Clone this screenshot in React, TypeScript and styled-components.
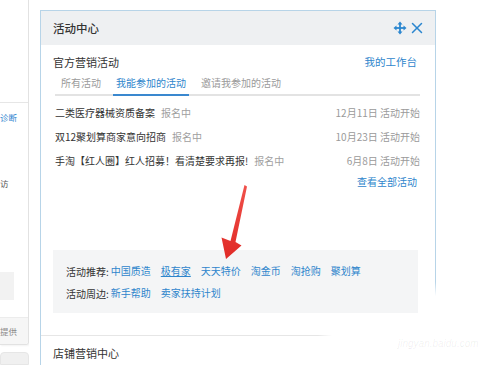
import React from "react";
import styled, { createGlobalStyle } from "styled-components";

const Global = createGlobalStyle`
  html, body { margin: 0; padding: 0; background: #fff; }
  body { font-family: "Noto Sans CJK SC", "Noto Sans", sans-serif; color: #333; }
  * { box-sizing: border-box; }
`;

const Page = styled.div`
  position: relative;
  width: 500px;
  height: 365px;
  overflow: hidden;
  display: flex;
  align-items: flex-start;
  background: #fff;
`;

const Sidebar = styled.div`
  width: 29px;
  height: 365px;
  display: flex;
  flex-direction: column;
  flex-shrink: 0;
  overflow: hidden;
`;

const SideCard = styled.div`
  height: 345px;
  border-right: 1px solid #e2e2e2;
  border-bottom: 1px solid #e2e2e2;
  border-bottom-right-radius: 3px;
  box-shadow: 1px 1px 2px rgba(0, 0, 0, 0.05);
  display: flex;
  flex-direction: column;
  overflow: hidden;
`;

const SideTop = styled.div`
  height: 103px;
  flex-shrink: 0;
  border-bottom: 1px solid #e6e6e6;
`;

const SideText = styled.div<{ $top: number; $blue?: boolean }>`
  margin-top: ${(p) => p.$top}px;
  font-size: 8.5px;
  line-height: 16px;
  white-space: nowrap;
  color: ${(p) => (p.$blue ? "#2f86cf" : "#555")};
`;

const SideBlock = styled.div`
  margin-top: 81px;
  width: 14px;
  height: 28px;
  background: #f2f2f2;
`;

const SideFooter = styled.div`
  margin-top: auto;
  height: 27px;
  background: #f6f6f6;
  border-top: 1px solid #ececec;
  font-size: 8.5px;
  line-height: 26px;
  color: #8a8a8a;
  white-space: nowrap;
`;

const SideCard2 = styled.div`
  margin-top: 7px;
  flex: 1;
  background: #f0f0f0;
  border: 1px solid #e6e6e6;
  border-radius: 4px 4px 0 0;
`;

const Panel = styled.div`
  margin-left: 11px;
  margin-top: 10px;
  width: 396px;
  height: 360px;
  border: 1px solid #b7d4e8;
  border-bottom: none;
  display: flex;
  flex-direction: column;
  flex-shrink: 0;
  background: #fff;
`;

const Header = styled.div`
  height: 34px;
  background: #eef0f2;
  display: flex;
  align-items: center;
  justify-content: space-between;
  padding: 0 11px 0 12px;
  flex-shrink: 0;
`;

const HeaderTitle = styled.div`
  font-size: 11.5px;
  font-weight: 500;
  color: #333;
`;

const HeaderIcons = styled.div`
  display: flex;
  align-items: center;
  gap: 3px;
`;

const Section = styled.div`
  padding: 9px 15px 22px 12px;
  border-bottom: 1px solid #e6e6e6;
`;

const TitleRow = styled.div`
  display: flex;
  justify-content: space-between;
  align-items: center;
  height: 16px;
`;

const SectionTitle = styled.div`
  font-size: 11px;
  line-height: 16px;
  color: #333;
`;

const Link = styled.a<{ $underline?: boolean }>`
  font-size: 10px;
  line-height: 16px;
  color: #2e85cc;
  text-decoration: ${(p) => (p.$underline ? "underline" : "none")};
  white-space: nowrap;
  cursor: pointer;
`;

const HeadLink = styled(Link)`
  font-size: 10.5px;
  margin-right: 3px;
`;

const TabBar = styled.div`
  margin-top: 5px;
  margin-left: 2px;
  padding-left: 3px;
  display: flex;
  gap: 9px;
  border-bottom: 2px solid #e3e3e3;
`;

const Tab = styled.div<{ $active?: boolean }>`
  font-size: 10px;
  line-height: 16px;
  padding: 0 3px 3px;
  margin-bottom: -2px;
  border-bottom: 2px solid ${(p) => (p.$active ? "#3a88cf" : "transparent")};
  color: ${(p) => (p.$active ? "#2e85cc" : "#9a9a9a")};
  white-space: nowrap;
`;

const List = styled.div`
  margin-top: 4px;
  display: flex;
  flex-direction: column;
`;

const Row = styled.div`
  height: 24px;
  display: flex;
  align-items: center;
  justify-content: space-between;
  font-size: 10px;
  padding-left: 2px;
`;

const RowName = styled.span`
  color: #333;
  white-space: nowrap;
`;

const RowStatus = styled.span`
  color: #a0a0a0;
  margin-left: 6px;
`;

const RowDate = styled.span`
  color: #9a9a9a;
  white-space: nowrap;
`;

const MoreRow = styled.div`
  height: 20px;
  display: flex;
  align-items: center;
  justify-content: flex-end;
  padding-right: 3px;
`;

const RecBox = styled.div`
  margin-top: 58px;
  margin-right: 2px;
  background: #f4f5f6;
  padding: 10px 13px 9px;
  display: flex;
  flex-direction: column;
`;

const RecLine = styled.div`
  height: 22px;
  display: flex;
  align-items: center;
  gap: 10px;
`;

const RecLabel = styled.span`
  font-size: 10px;
  color: #333;
  margin-right: -8px;
  white-space: nowrap;
`;

const Section2 = styled.div`
  padding: 9px 12px 0;
`;

const Overlay = styled.svg`
  position: absolute;
  left: 0;
  top: 0;
  pointer-events: none;
`;

const Fade = styled.div<{ $l: number; $t: number; $w: number; $h: number; $dir: string }>`
  position: absolute;
  left: ${(p) => p.$l}px;
  top: ${(p) => p.$t}px;
  width: ${(p) => p.$w}px;
  height: ${(p) => p.$h}px;
  background: linear-gradient(${(p) => p.$dir}, rgba(255, 255, 255, 0), #fff 14px);
`;

const Watermark = styled.div`
  position: absolute;
  left: 398px;
  top: 338px;
  font-family: "Liberation Sans", sans-serif;
  font-size: 10px;
  font-style: italic;
  color: rgba(0, 0, 0, 0.07);
`;

const MoveIcon = () => (
  <svg width="14" height="14" viewBox="0 0 14 14">
    <g stroke="#2b86cf" strokeWidth="1.8" fill="none">
      <line x1="7" y1="2.5" x2="7" y2="11.5" />
      <line x1="2.5" y1="7" x2="11.5" y2="7" />
    </g>
    <g fill="#2b86cf">
      <polygon points="7,0.5 4.5,3.5 9.5,3.5" />
      <polygon points="7,13.5 4.5,10.5 9.5,10.5" />
      <polygon points="0.5,7 3.5,4.5 3.5,9.5" />
      <polygon points="13.5,7 10.5,4.5 10.5,9.5" />
    </g>
  </svg>
);

const CloseIcon = () => (
  <svg width="14" height="14" viewBox="0 0 14 14">
    <g stroke="#2b86cf" strokeWidth="1.5" strokeLinecap="round">
      <line x1="2.5" y1="2.5" x2="11.5" y2="11.5" />
      <line x1="11.5" y1="2.5" x2="2.5" y2="11.5" />
    </g>
  </svg>
);

const rows = [
  { name: "二类医疗器械资质备案", date: "12月11日 活动开始" },
  { name: "双12聚划算商家意向招商", date: "10月23日 活动开始" },
  { name: "手淘【红人圈】红人招募！看清楚要求再报!", date: "6月8日 活动开始" },
];

export default function App() {
  return (
    <Page>
      <Global />
      <Sidebar>
        <SideCard>
          <SideTop />
          <SideText $top={6} $blue>诊断</SideText>
          <SideText $top={50}>访</SideText>
          <SideBlock />
          <SideFooter>提供</SideFooter>
        </SideCard>
        <SideCard2 />
      </Sidebar>
      <Panel>
        <Header>
          <HeaderTitle>活动中心</HeaderTitle>
          <HeaderIcons>
            <MoveIcon />
            <CloseIcon />
          </HeaderIcons>
        </Header>
        <Section>
          <TitleRow>
            <SectionTitle>官方营销活动</SectionTitle>
            <HeadLink>我的工作台</HeadLink>
          </TitleRow>
          <TabBar>
            <Tab>所有活动</Tab>
            <Tab $active>我能参加的活动</Tab>
            <Tab>邀请我参加的活动</Tab>
          </TabBar>
          <List>
            {rows.map((r) => (
              <Row key={r.name}>
                <RowName>
                  {r.name}
                  <RowStatus>报名中</RowStatus>
                </RowName>
                <RowDate>{r.date}</RowDate>
              </Row>
            ))}
          </List>
          <MoreRow>
            <Link>查看全部活动</Link>
          </MoreRow>
          <RecBox>
            <RecLine>
              <RecLabel>活动推荐:</RecLabel>
              <Link>中国质造</Link>
              <Link $underline>极有家</Link>
              <Link>天天特价</Link>
              <Link>淘金币</Link>
              <Link>淘抢购</Link>
              <Link>聚划算</Link>
            </RecLine>
            <RecLine>
              <RecLabel>活动周边:</RecLabel>
              <Link>新手帮助</Link>
              <Link>卖家扶持计划</Link>
            </RecLine>
          </RecBox>
        </Section>
        <Section2>
          <SectionTitle>店铺营销中心</SectionTitle>
        </Section2>
      </Panel>
      <Fade $l={425} $t={282} $w={30} $h={83} $dir="to bottom" />
      <Fade $l={318} $t={326} $w={182} $h={20} $dir="to right" />
      <Watermark>jingyan.baidu.com</Watermark>
      <Overlay width="500" height="365" viewBox="0 0 500 365">
        <defs>
          <linearGradient id="ar" x1="0" y1="0" x2="0" y2="1">
            <stop offset="0" stopColor="#f0504a" />
            <stop offset="1" stopColor="#e02a26" />
          </linearGradient>
        </defs>
        <polygon
          points="244.5,185 247,186.5 235.5,242 241.5,245.5 226,259 221.5,237.5 230.5,241"
          fill="url(#ar)"
        />
      </Overlay>
    </Page>
  );
}
